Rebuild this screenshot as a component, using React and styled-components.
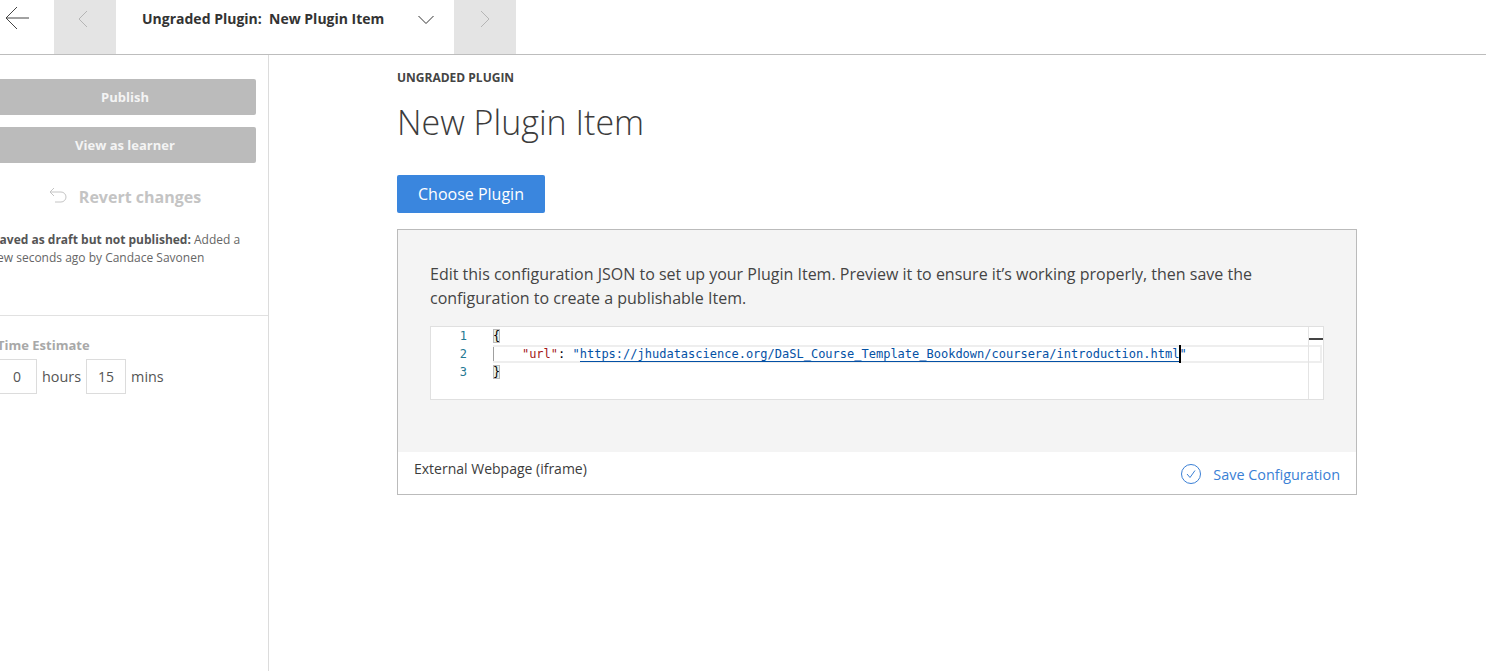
import React from 'react';
import styled, { createGlobalStyle } from 'styled-components';

const GlobalStyle = createGlobalStyle`
  html, body {
    margin: 0;
    padding: 0;
    background: #fff;
    overflow: hidden;
  }
  body {
    font-family: "Open Sans", "Liberation Sans", sans-serif;
    color: #3c3c3c;
  }
`;

const Page = styled.div`
  width: 1486px;
  height: 671px;
  overflow: hidden;
  display: flex;
  flex-direction: column;
`;

const TopBar = styled.header`
  height: 55px;
  box-sizing: border-box;
  flex: none;
  display: flex;
  border-bottom: 1px solid #bdbdbd;
  background: #fff;
`;

const BackButton = styled.div`
  width: 54px;
  height: 36px;
  padding-left: 5px;
  padding-top: 6px;
  box-sizing: border-box;
  flex: none;
  svg { display: block; }
`;

const NavArrow = styled.div`
  width: 62px;
  flex: none;
  background: #e4e4e4;
  display: flex;
  justify-content: center;
  padding: 10px ${p => p.$inset}px 0 0;
  box-sizing: border-box;
  svg { display: block; }
`;

const ItemPicker = styled.div`
  width: 338px;
  flex: none;
  display: flex;
  padding: 9px 20px 0 26px;
  box-sizing: border-box;
  justify-content: space-between;
  font-size: 14px;
  font-weight: 700;
  line-height: 20px;
  color: #333;
  white-space: pre;
  svg { display: block; margin-top: 6px; }
`;

const Body = styled.div`
  flex: 1;
  display: flex;
  min-height: 0;
`;

const Sidebar = styled.aside`
  width: 281px;
  margin-left: -12px;
  flex: none;
  box-sizing: border-box;
  border-right: 1px solid #dcdcdc;
  padding-top: 24px;
`;

const SideActions = styled.div`
  padding: 0 12px 0 6px;
  display: flex;
  flex-direction: column;
  gap: 12px;
`;

const GreyButton = styled.div`
  height: 36px;
  background: #bbbbbb;
  border-radius: 2px;
  color: #f4f4f4;
  font-size: 13px;
  font-weight: 700;
  line-height: 36px;
  text-align: center;
`;

const Revert = styled.div`
  display: flex;
  align-items: center;
  justify-content: center;
  gap: 12px;
  height: 36px;
  margin-top: 4px;
  font-size: 16px;
  font-weight: 700;
  color: #c4c4c4;
  svg { display: block; margin-top: -4px; }
`;

const DraftNote = styled.p`
  margin: 16px 0 0;
  padding: 0 24px 48px 5px;
  font-size: 12px;
  line-height: 18px;
  color: #666;
  border-bottom: 1px solid #e1e1e1;
  b { color: #555; font-weight: 700; }
`;

const TimeBlock = styled.div`
  padding: 20px 0 0 9px;
`;

const TimeLabel = styled.div`
  font-size: 13px;
  font-weight: 700;
  line-height: 18px;
  color: #a8a8a8;
`;

const TimeRow = styled.div`
  display: flex;
  align-items: center;
  margin-top: 5px;
  font-size: 14.4px;
  color: #555;
`;

const TimeBox = styled.div`
  width: 40px;
  height: 35px;
  box-sizing: border-box;
  border: 1px solid #dcdcdc;
  text-align: center;
  line-height: 33px;
  font-size: 14px;
`;

const TimeUnit = styled.span`
  margin: 0 5px;
`;

const Main = styled.main`
  flex: 1;
  padding: 14px 0 0 128px;
`;

const Eyebrow = styled.div`
  font-size: 12px;
  font-weight: 700;
  line-height: 18px;
  color: #444;
`;

const Title = styled.h1`
  margin: 12px 0 0;
  font-size: 34px;
  font-weight: 300;
  line-height: 46px;
  color: #3c3c3c;
`;

const PrimaryButton = styled.div`
  width: 148px;
  height: 38px;
  margin-top: 30px;
  background: #3a86de;
  border-radius: 2px;
  color: #fff;
  font-size: 16px;
  line-height: 38px;
  text-align: center;
`;

const Panel = styled.section`
  width: 960px;
  height: 266px;
  margin-top: 16px;
  box-sizing: border-box;
  border: 1px solid #bbb;
  display: flex;
  flex-direction: column;
`;

const PanelBody = styled.div`
  flex: 1;
  background: #f4f4f4;
  padding: 32px 32px 0;
`;

const Intro = styled.p`
  margin: 0;
  font-size: 16px;
  line-height: 24px;
  color: #444;
`;

const Editor = styled.div`
  position: relative;
  width: 894px;
  height: 74px;
  margin-top: 16px;
  box-sizing: border-box;
  border: 1px solid #e0e0e0;
  background: #fff;
  display: flex;
  font-family: "DejaVu Sans Mono", "Liberation Mono", monospace;
  font-size: 12px;
  line-height: 18px;
`;

const Gutter = styled.div`
  width: 62px;
  flex: none;
  color: #237893;
  text-align: right;
  padding-right: 26px;
  box-sizing: border-box;
`;

const Code = styled.div`
  flex: 1;
  min-width: 0;
  color: #000;
  white-space: pre;
`;

const CodeLine = styled.div`
  height: 18px;
  position: relative;
  box-sizing: border-box;
  ${p => p.$current && `
    border: 2px solid #eee;
    border-left: 0;
    box-shadow: inset 1px 0 0 #a0a0a0;
    line-height: 14px;
    margin-right: -14px;
  `}
`;

const Bracket = styled.span`
  background: #e8efe8;
  outline: 1px solid #b9b9b9;
  outline-offset: -1px;
`;

const Key = styled.span`
  color: #a31515;
`;

const Quote = styled.span`
  color: #0451a5;
`;

const Link = styled.span`
  color: #0451a5;
  border-bottom: 1px solid #0451a5;
`;

const Caret = styled.span`
  position: absolute;
  left: 686px;
  top: -2px;
  width: 2px;
  height: 18px;
  background: #000;
`;

const MiniMap = styled.div`
  width: 14px;
  flex: none;
  border-left: 1px solid #e4e4e4;
  position: relative;
  &::after {
    content: "";
    position: absolute;
    left: 0;
    right: 0;
    top: 11px;
    height: 2px;
    background: #444;
  }
`;

const PanelFooter = styled.div`
  height: 42px;
  flex: none;
  background: #fff;
  display: flex;
  justify-content: space-between;
  padding: 0 16px;
  box-sizing: border-box;
`;

const PluginName = styled.div`
  font-size: 14px;
  line-height: 34px;
  color: #3c3c3c;
`;

const SaveLink = styled.div`
  display: flex;
  align-items: center;
  gap: 12px;
  height: 44px;
  font-size: 14.4px;
  color: #3a7fd5;
  svg { display: block; }
`;

const Chevron = ({ dir, color }) => (
  <svg width="14" height="18" viewBox="0 0 14 18" fill="none" stroke={color} strokeWidth="1">
    <path d={dir === 'left' ? 'M11 1 L3 9 L11 17' : 'M3 1 L11 9 L3 17'} />
  </svg>
);

export default function App() {
  return (
    <Page>
      <GlobalStyle />
      <TopBar>
        <BackButton>
          <svg width="24" height="24" viewBox="0 0 24 24" fill="none" stroke="#444" strokeWidth="1">
            <path d="M24 12 H1 M12 1 L1 12 L12 23" />
          </svg>
        </BackButton>
        <NavArrow $inset={4}><Chevron dir="left" color="#b5b5b5" /></NavArrow>
        <ItemPicker>
          <span>Ungraded Plugin:  New Plugin Item</span>
          <svg width="16" height="10" viewBox="0 0 16 10" fill="none" stroke="#333" strokeWidth="1">
            <path d="M0.5 1 L8 8.5 L15.5 1" />
          </svg>
        </ItemPicker>
        <NavArrow $inset={0}><Chevron dir="right" color="#b5b5b5" /></NavArrow>
      </TopBar>
      <Body>
        <Sidebar>
          <SideActions>
            <GreyButton>Publish</GreyButton>
            <GreyButton>View as learner</GreyButton>
            <Revert>
              <svg width="18" height="16" viewBox="0 0 18 16" fill="none" stroke="#c4c4c4" strokeWidth="1">
                <path d="M5 1 L1 5 L5 9 M1 5 H12 A5 5 0 0 1 12 15 H6" />
              </svg>
              Revert changes
            </Revert>
          </SideActions>
          <DraftNote>
            <b>Saved as draft but not published:</b> Added a few seconds ago by Candace Savonen
          </DraftNote>
          <TimeBlock>
            <TimeLabel>Time Estimate</TimeLabel>
            <TimeRow>
              <TimeBox>0</TimeBox>
              <TimeUnit>hours</TimeUnit>
              <TimeBox>15</TimeBox>
              <TimeUnit>mins</TimeUnit>
            </TimeRow>
          </TimeBlock>
        </Sidebar>
        <Main>
          <Eyebrow>UNGRADED PLUGIN</Eyebrow>
          <Title>New Plugin Item</Title>
          <PrimaryButton>Choose Plugin</PrimaryButton>
          <Panel>
            <PanelBody>
              <Intro>
                Edit this configuration JSON to set up your Plugin Item. Preview it to ensure it’s working properly, then save the configuration to create a publishable Item.
              </Intro>
              <Editor>
                <Gutter>
                  <div>1</div>
                  <div>2</div>
                  <div>3</div>
                </Gutter>
                <Code>
                  <CodeLine><Bracket>{'{'}</Bracket></CodeLine>
                  <CodeLine $current>
                    {'    '}<Key>"url"</Key>: <Quote>"</Quote><Link>https://jhudatascience.org/DaSL_Course_Template_Bookdown/coursera/introduction.html</Link><Quote>"</Quote>
                    <Caret />
                  </CodeLine>
                  <CodeLine><Bracket>{'}'}</Bracket></CodeLine>
                </Code>
                <MiniMap />
              </Editor>
            </PanelBody>
            <PanelFooter>
              <PluginName>External Webpage (iframe)</PluginName>
              <SaveLink>
                <svg width="20" height="20" viewBox="0 0 20 20" fill="none" stroke="#3a7fd5" strokeWidth="1">
                  <circle cx="10" cy="10" r="9.5" />
                  <path d="M6 10 L9 13.5 L14 6.5" />
                </svg>
                Save Configuration
              </SaveLink>
            </PanelFooter>
          </Panel>
        </Main>
      </Body>
    </Page>
  );
}
